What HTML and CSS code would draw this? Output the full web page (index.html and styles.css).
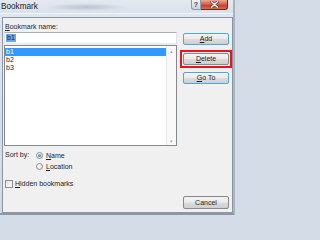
FILE: index.html
```html
<!DOCTYPE html>
<html>
<head>
<meta charset="utf-8">
<link rel="stylesheet" href="styles.css">
</head>
<body>
<div class="window">
  <div class="titlebar">
    <span class="title">Bookmark</span>
    <span class="blur"></span>
    <div class="caption">
      <span class="cap-btn help">?</span>
      <span class="cap-btn close">
        <svg width="9" height="7" viewBox="0 0 9 7"><path d="M1.5 0.8 L7.5 6.2 M7.5 0.8 L1.5 6.2" stroke="#5a1a14" stroke-width="2.6" stroke-linecap="round"/><path d="M1.5 0.8 L7.5 6.2 M7.5 0.8 L1.5 6.2" stroke="#ffffff" stroke-width="1.5" stroke-linecap="round"/></svg>
      </span>
    </div>
  </div>
  <div class="panel">
    <div class="main">
      <div class="left">
        <div class="label"><u>B</u>ookmark name:</div>
        <div class="input"><span class="sel">b1</span></div>
        <div class="list">
          <div class="items">
            <div class="item selected">b1</div>
            <div class="item">b2</div>
            <div class="item">b3</div>
          </div>
          <div class="scrollbar">
            <span class="arrow">&#9652;</span>
            <span class="arrow">&#9662;</span>
          </div>
        </div>
      </div>
      <div class="buttons">
        <div class="btn blue"><u>A</u>dd</div>
        <div class="highlight"><div class="btn"><u>D</u>elete</div></div>
        <div class="btn blue gap"><u>G</u>o To</div>
      </div>
    </div>
    <div class="sort">
      <span class="sort-label">Sort by:</span>
      <div class="radios">
        <div class="opt"><span class="radio on"></span><span><u>N</u>ame</span></div>
        <div class="opt"><span class="radio"></span><span><u>L</u>ocation</span></div>
      </div>
    </div>
    <div class="check"><span class="box"></span><span><u>H</u>idden bookmarks</span></div>
    <div class="footer"><div class="btn cancel">Cancel</div></div>
  </div>
</div>
</body>
</html>
```

FILE: styles.css
```css
html, body {
  margin: 0;
  padding: 0;
  background: #d3dce7;
}
.window {
  width: 235px;
  height: 215px;
  display: flex;
  flex-direction: column;
  background: linear-gradient(#dfe6ef, #cfd9e5);
  font-family: "Liberation Sans", Arial, sans-serif;
  font-size: 7px;
  color: #1e1e1e;
  overflow: hidden;
  box-sizing: border-box;
  border-right: 2px solid #aab4c1;
  border-bottom: 2px solid #8d97a4;
}
.titlebar {
  height: 13px;
  display: flex;
  align-items: flex-start;
  position: relative;
  background: linear-gradient(#e4e9ef, #d9e1eb);
  border-bottom: 1px solid #f1f4f8;
}
.title {
  font-size: 8.2px;
  line-height: 13px;
  padding-left: 1px;
  color: #1a1a1a;
}
.blur {
  width: 80px;
  height: 8px;
  margin: 3px 0 0 8px;
  border-radius: 4px;
  background: radial-gradient(ellipse at center, rgba(120,130,150,0.35), rgba(200,208,220,0) 70%);
}
.caption {
  margin-left: auto;
  margin-right: 5px;
  display: flex;
}
.cap-btn {
  height: 10px;
  display: flex;
  align-items: center;
  justify-content: center;
  box-sizing: border-box;
}
.help {
  width: 10px;
  border: 1px solid #8e98a6;
  border-top: none;
  border-radius: 0 0 0 3px;
  background: linear-gradient(#eef1f5, #cdd4de);
  color: #3b4450;
  font-size: 7px;
  font-weight: bold;
}
.close {
  width: 27px;
  border: 1px solid #6d2a22;
  border-top: none;
  border-left: none;
  border-radius: 0 0 3px 0;
  background: linear-gradient(#e9a99b, #d45a48 50%, #c2382a 51%, #d86a4e);
}
.panel {
  margin: 3px 0 0 2px;
  width: 231px;
  height: 196px;
  box-sizing: border-box;
  border: 1px solid #8c97a6;
  background: #f0f0f0;
  display: flex;
  flex-direction: column;
  padding: 5px 0 4px 0;
}
.main {
  display: flex;
}
.left {
  margin-left: 1px;
  width: 173px;
  display: flex;
  flex-direction: column;
}
.label {
  height: 8px;
  line-height: 8px;
  margin-left: 1px;
  margin-bottom: 1px;
  color: #1f2530;
}
.input {
  height: 12px;
  box-sizing: border-box;
  border: 1px solid #abadb3;
  border-left-color: #e2e3ea;
  border-right-color: #dbdfe6;
  border-bottom-color: #e3e9ef;
  background: #fff;
  padding: 1px 0 0 1px;
  margin-bottom: 1px;
  display: flex;
}
.sel {
  background: #6ea7df;
  color: #0d2440;
  line-height: 8px;
  height: 8px;
  padding: 0 1px;
}
.list {
  height: 101px;
  box-sizing: border-box;
  border: 1px solid #828790;
  background: #fff;
  display: flex;
}
.items {
  flex: 1;
  padding-top: 2px;
}
.item {
  height: 8px;
  line-height: 8px;
  padding-left: 1px;
}
.item.selected {
  background: #3399ff;
  color: #fff;
}
.scrollbar {
  width: 9px;
  border-left: 1px solid #e6e6e6;
  background: #f9f9f9;
  display: flex;
  flex-direction: column;
  justify-content: space-between;
  align-items: center;
  padding: 3px 0 1px 0;
}
.arrow {
  font-size: 5px;
  line-height: 5px;
  color: #a8a8a8;
}
.buttons {
  margin-left: 3px;
  display: flex;
  flex-direction: column;
  padding-top: 10px;
}
.btn {
  width: 46px;
  height: 12px;
  box-sizing: border-box;
  border: 1px solid #8a8a8a;
  border-radius: 2px;
  background: linear-gradient(#f3f3f3, #ebebeb 48%, #dcdcdc 52%, #cfcfcf);
  display: flex;
  align-items: center;
  justify-content: center;
  line-height: 8px;
  color: #1e1e1e;
}
.buttons > .btn {
  margin-left: 3px;
}
.btn.blue {
  border-color: #4aa8dc;
}
.highlight {
  margin-top: 5px;
  width: 52px;
  box-sizing: border-box;
  border: 2px solid #e8141e;
  padding: 1px;
}
.btn.gap {
  margin-top: 4px;
}
.sort {
  margin-top: 4px;
  display: flex;
  padding-left: 2px;
}
.sort-label {
  width: 31px;
  line-height: 9px;
  height: 9px;
}
.radios {
  display: flex;
  flex-direction: column;
  gap: 1px;
}
.opt {
  display: flex;
  align-items: center;
  gap: 3px;
  height: 10px;
  line-height: 9px;
}
.radio {
  width: 7px;
  height: 7px;
  box-sizing: border-box;
  border: 1px solid #8e8f8f;
  border-radius: 50%;
  background: radial-gradient(circle at 40% 40%, #ffffff, #d8d8d8);
  display: flex;
  align-items: center;
  justify-content: center;
}
.radio.on::after {
  content: "";
  width: 3px;
  height: 3px;
  border-radius: 50%;
  background: radial-gradient(circle at 40% 35%, #7ec3f0, #1c5d9c);
}
.check {
  margin-top: 8px;
  height: 9px;
  display: flex;
  align-items: center;
  gap: 2px;
  padding-left: 2px;
  line-height: 9px;
}
.box {
  width: 8px;
  height: 8px;
  box-sizing: border-box;
  border: 1px solid #8e8f8f;
  background: linear-gradient(135deg, #e0e0e0, #ffffff);
}
.footer {
  margin-top: 8px;
  display: flex;
  justify-content: flex-end;
  padding-right: 3px;
}
.btn.cancel {
  height: 13px;
}
```
